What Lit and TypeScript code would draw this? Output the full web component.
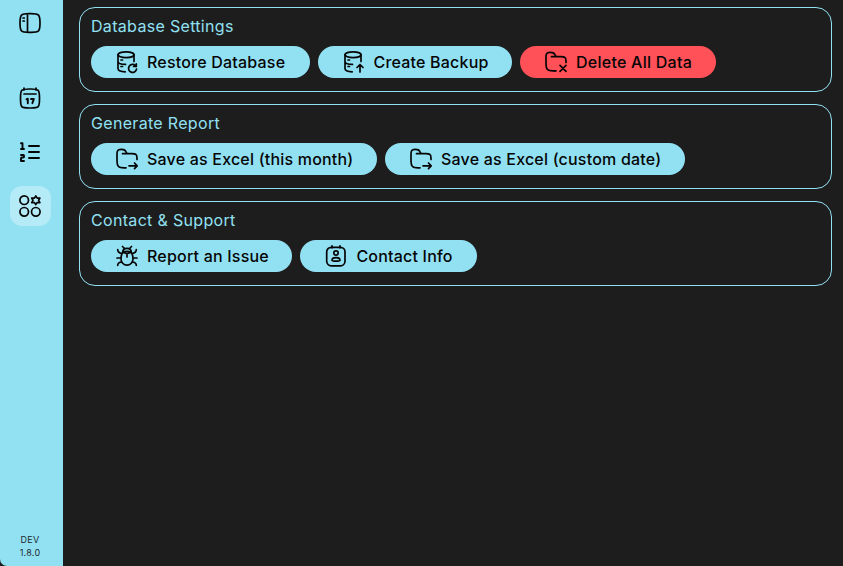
import { LitElement, html, css, svg, SVGTemplateResult } from "lit";
import { customElement, property } from "lit/decorators.js";

const dbBody = svg`<ellipse cx="11" cy="4.700" rx="8" ry="2.900"/><path d="M6 10h1.500M6 16.500h1.500M3 11.500c0 1.600 3 2.900 7.500 2.900M19 4.700v6.800M3 4.700v13.800c0 1.900 3 3.200 7.200 3.400"/>`;
const folder = svg`<path d="M11 20.800H9C5.500 20.800 4.500 20.500 3.500 19.500C2 18.100 2 16 2 13V7.900C2 5.900 2 4.900 2.400 4.200C2.700 3.600 3.200 3 3.800 2.700C4.500 2.300 5.500 2.300 6.500 2.300C9 2.300 10 2.600 10.800 4.300L12 6.700M7.500 6.700H16.800C18.900 6.700 20 6.700 20.700 7.200C22.300 8.200 22 10 22 12.500"/>`;

const icons: Record<string, SVGTemplateResult> = {
  sidebar: svg`<path d="M2 12c0-4.300 0-6.400 1.500-7.900C5 2.700 7.200 2.700 11 2.700h2c3.800 0 6 0 7.500 1.400C22 5.600 22 7.700 22 12s0 6.400-1.500 7.900C19 21.300 16.800 21.300 13 21.300h-2c-3.800 0-6 0-7.500-1.400C2 18.400 2 16.300 2 12zM9.500 3v18M5 7h1.300M5 10h1.300"/>`,
  calendar: svg`<path d="M18 2v2M6 2v2M6 8h12"/><path d="M2.500 12.200c0-4.300 0-6.500 1.300-7.800S7.200 3 11.200 3h1.600c4 0 6.100 0 7.400 1.400s1.300 3.500 1.300 7.800v.6c0 4.300 0 6.500-1.300 7.800S16.800 22 12.800 22h-1.600c-4 0-6.100 0-7.400-1.400s-1.300-3.500-1.300-7.800z"/><path d="M8.500 13.300l1-.6h.3v4.500M13 13h2.800c0 1.400-1.100 2.400-1.400 4.200" stroke-width="1.900"/>`,
  list: svg`<path d="M11 6h10M11 12h10M11 18h10M3 3.200h1.500V9M3 9h3M3 15h2.300q.7 0 .7.800v1q0 .7-.7.700h-1.500q-.8 0-.8.800V21h3" stroke-width="1.900"/>`,
  grid: svg`<circle cx="6.200" cy="6.200" r="4.300"/><circle cx="6.200" cy="17.800" r="4.300"/><circle cx="17.800" cy="17.800" r="4.300"/><path d="M17.800 2l1.400 2.100 2.700-.1-1.300 2.300 1.300 2.300-2.700-.1-1.400 2.100-1.400-2.100-2.700.1 1.300-2.300L13.700 4l2.700.1z"/>`,
  restore: svg`${dbBody}<path d="M20.300 15.500A4 4 0 1 0 21.500 19.200M21.300 13.800v2.700h-2.700"/>`,
  backup: svg`${dbBody}<path d="M18 22v-7.300M15 17.500l3-3 3 3"/>`,
  folderX: svg`${folder}<path d="M11 20.800h1M16 15.300l6 6M22 15.300l-6 6"/>`,
  folderGo: svg`${folder}<path d="M14 18.800h8M19.500 16L22.200 18.800l-2.700 2.800"/>`,
  bug: svg`<path d="M12 21.200c-3.500 0-6-2.900-6-6.500 0-2.500.6-4.600 1.700-6.500 2.800-1 5.800-1 8.600 0C17.400 10.100 18 12.200 18 14.700c0 3.600-2.500 6.500-6 6.500zM7.700 8.200C7.700 5.500 9.500 4.300 12 4.300s4.300 1.200 4.300 3.900M7.700 8.200L12 9.700l4.300-1.500M12 13V9.700M9.500 4.500L7.500 2.500M14.500 4.500L16.500 2.500M6.800 9.500C4 9 2.700 8 2.700 5.500M17.200 9.500C20 9 21.300 8 21.300 5.500M6 14H2M18 14H22M7 18c-2.500.1-4.300 1-4.300 3.300M17 18c2.500.1 4.300 1 4.300 3.300"/>`,
  contact: svg`<rect x="2.700" y="3.300" width="18.300" height="18.500" rx="4.500"/><path d="M8 1.800v2M16 1.800v2"/><circle cx="12" cy="9" r="2.200"/><path d="M8 16.200c0-3.400 8-3.400 8 0 0 1.300-8 1.300-8 0z"/>`,
};

@customElement("ui-icon")
export class UiIcon extends LitElement {
  static styles = css`
    :host { display: block; width: 24px; height: 24px; flex: none; }
    .glyph { display: block; width: 100%; height: 100%; fill: none; stroke: #050505; stroke-width: 1.7; stroke-linecap: round; stroke-linejoin: round; }
  `;
  @property() name = "";
  render() {
    return html`<svg class="glyph" viewBox="0 0 24 24">${icons[this.name]}</svg>`;
  }
}

type Action = { icon: string; label: string; fit: string; danger?: boolean };
type Section = { title: string; actions: Action[] };

const sections: Section[] = [
  { title: "Database Settings", actions: [
    { icon: "restore", label: "Restore Database", fit: "w218" },
    { icon: "backup", label: "Create Backup", fit: "w195" },
    { icon: "folderX", label: "Delete All Data", fit: "w196", danger: true },
  ] },
  { title: "Generate Report", actions: [
    { icon: "folderGo", label: "Save as Excel (this month)", fit: "w286" },
    { icon: "folderGo", label: "Save as Excel (custom date)", fit: "w300" },
  ] },
  { title: "Contact & Support", actions: [
    { icon: "bug", label: "Report an Issue", fit: "w202" },
    { icon: "contact", label: "Contact Info", fit: "w177" },
  ] },
];

@customElement("app-root")
export class AppRoot extends LitElement {
  static styles = css`
    :host { display: flex; height: 100vh; overflow: hidden; background: #1d1d1d; font-family: Inter, "Liberation Sans", sans-serif; }
    * { box-sizing: border-box; }
    .side { width: 63px; flex: none; background: radial-gradient(circle at 7px calc(100% - 7px), #92e1f3 7px, transparent 7.5px) left bottom / 7px 7px no-repeat, #92e1f3; border-bottom-left-radius: 7px; display: flex; flex-direction: column; align-items: center; padding: 3px 3px 7px 0; }
    .nav { width: 41px; height: 40px; border-radius: 12px; display: grid; place-items: center; margin-bottom: 14px; flex: none; }
    .toggle { margin-bottom: 35px; }
    .active { background: #b4ebf7; }
    .version { margin-top: auto; font-size: 9px; line-height: 13px; text-align: center; color: #1d2b2f; letter-spacing: 0.25px; }
    .main { flex: 1; display: flex; flex-direction: column; gap: 12px; padding: 7px 11px 0 16px; }
    .card { height: 85px; border: 1px solid #92e1f3; border-radius: 16px; padding: 6px 11px; }
    .title { margin: 0; font-size: 16px; font-weight: 400; line-height: 24px; color: #92e1f3; letter-spacing: 0.32px; }
    .row { display: flex; gap: 8px; margin-top: 8px; }
    .btn { height: 32px; border: 0; border-radius: 16px; padding: 0 0 0 24px; display: flex; align-items: center; gap: 8px; background: #92e1f3; color: #050505; font: 500 16px/24px Inter, sans-serif; white-space: nowrap; letter-spacing: 0.2px; }
    .danger { background: #ff5157; letter-spacing: 0.25px; }
    .w218 { width: 218.5px; } .w195 { width: 194.5px; } .w196 { width: 196px; }
    .w286 { width: 286px; } .w300 { width: 300px; } .w202 { width: 201.4px; } .w177 { width: 176.6px; }
  `;
  render() {
    return html`
      <nav class="side">
        <div class="nav toggle"><ui-icon name="sidebar"></ui-icon></div>
        <div class="nav"><ui-icon name="calendar"></ui-icon></div>
        <div class="nav"><ui-icon name="list"></ui-icon></div>
        <div class="nav active"><ui-icon name="grid"></ui-icon></div>
        <div class="version">DEV<br />1.8.0</div>
      </nav>
      <main class="main">
        ${sections.map((s) => html`
          <section class="card">
            <h2 class="title">${s.title}</h2>
            <div class="row">
              ${s.actions.map((a) => html`<button class="btn ${a.fit} ${a.danger ? "danger" : ""}"><ui-icon name=${a.icon}></ui-icon><span>${a.label}</span></button>`)}
            </div>
          </section>`)}
      </main>`;
  }
}
